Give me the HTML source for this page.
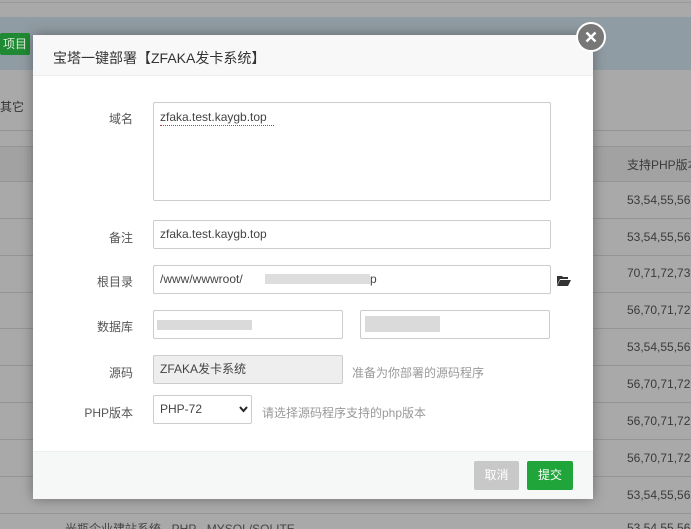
<!DOCTYPE html>
<html><head><meta charset="utf-8"><style>
*{box-sizing:border-box;margin:0;padding:0}
html,body{width:691px;height:529px;overflow:hidden}
body{position:relative;background:#a9a9a9;font-family:"Liberation Sans","Noto Sans CJK SC",sans-serif;font-size:12px;color:#333;white-space:nowrap}
.a{position:absolute}
.line{position:absolute;left:0;width:691px;height:1px;background:#959595}
.r{position:absolute;left:627px;color:#3a3a3a;font-size:12px;white-space:nowrap}
.dlg{position:absolute;left:33px;top:35px;width:560px;height:464px;background:#fff;box-shadow:0 0 12px rgba(0,0,0,.35)}
.lbl{position:absolute;width:100px;text-align:right;color:#555;font-size:12px}
.inp{position:absolute;border:1px solid #ccc;border-radius:2px;background:#fff;color:#444;font-size:12px;padding-left:6px;line-height:27px}
.hint{position:absolute;color:#999;font-size:12px}
.blur{position:absolute;background:#bbb;opacity:.8}
</style></head><body>
<div class="line" style="top:2px;background:#999"></div>
<div class="a" style="left:0;top:17px;width:691px;height:53px;background:#909ca3"></div>
<div class="a" style="left:0;top:33px;width:30px;height:22px;background:#1f8a33;border-radius:2px;color:#d9ead9;font-size:12px;line-height:22px;text-align:center">项目</div>
<div class="a" style="left:0;top:98px;color:#333;font-size:12px">其它</div>
<div class="line" style="top:130px"></div>
<div class="a" style="left:0;top:146px;width:691px;height:35px;background:#a2a2a2"></div>
<div class="line" style="top:146px"></div>
<div class="r" style="top:156px">支持PHP版本</div>
<div class="line" style="top:181px"></div><div class="r" style="top:193px">53,54,55,56</div>
<div class="line" style="top:218px"></div><div class="r" style="top:230px">53,54,55,56</div>
<div class="line" style="top:255px"></div><div class="r" style="top:266px">70,71,72,73</div>
<div class="line" style="top:292px"></div><div class="r" style="top:303px">56,70,71,72</div>
<div class="line" style="top:328px"></div><div class="r" style="top:340px">53,54,55,56</div>
<div class="line" style="top:365px"></div><div class="r" style="top:377px">56,70,71,72</div>
<div class="line" style="top:402px"></div><div class="r" style="top:414px">56,70,71,72</div>
<div class="line" style="top:439px"></div><div class="r" style="top:451px">56,70,71,72</div>
<div class="line" style="top:476px"></div><div class="r" style="top:488px">53,54,55,56</div>
<div class="line" style="top:513px"></div><div class="r" style="top:521px">53,54,55,56</div>
<div class="a" style="left:65px;top:520px;color:#444">光瓶企业建站系统 - PHP - MYSQL/SQLITE</div>

<div class="dlg">
 <div class="a" style="left:0;top:0;width:560px;height:41px;background:#f8f8f8;border-bottom:1px solid #eee"></div>
 <div class="a" style="left:20px;top:13px;font-size:14px;color:#333">宝塔一键部署【ZFAKA发卡系统】</div>
 <div class="a" style="left:0;top:416px;width:560px;height:48px;background:#f6f8f8;border-top:1px solid #eee"></div>
</div>
<div class="lbl" style="left:33px;top:110px">域名</div>
<div class="inp" style="left:153px;top:102px;width:398px;height:99px;line-height:normal;padding-top:7px">zfaka.test.kaygb.top<div style="position:absolute;left:6px;top:22px;width:114px;border-bottom:1px dotted #d33"></div></div>
<div class="lbl" style="left:33px;top:229px">备注</div>
<div class="inp" style="left:153px;top:220px;width:398px;height:29px">zfaka.test.kaygb.top</div>
<div class="lbl" style="left:33px;top:273px">根目录</div>
<div class="inp" style="left:153px;top:265px;width:398px;height:29px">/www/wwwroot/</div>
<div class="blur" style="left:265px;top:274px;width:105px;height:10px;opacity:.5"></div>
<div class="a" style="left:370px;top:272px;color:#444">p</div>
<svg class="a" style="left:557px;top:275px" width="14" height="11" viewBox="0 0 14 11"><path d="M0 1h5l1 1h5v2H3L0 10z" fill="#333"/><path d="M3 5h11l-3 6H0z" fill="#333"/></svg>
<div class="lbl" style="left:33px;top:318px">数据库</div>
<div class="inp" style="left:153px;top:310px;width:190px;height:29px"></div>
<div class="blur" style="left:157px;top:320px;width:95px;height:10px;opacity:.55"></div>
<div class="inp" style="left:360px;top:310px;width:190px;height:29px"></div>
<div class="blur" style="left:365px;top:316px;width:75px;height:16px;opacity:.55"></div>
<div class="lbl" style="left:33px;top:364px">源码</div>
<div class="inp" style="left:153px;top:355px;width:190px;height:29px;background:#eee">ZFAKA发卡系统</div>
<div class="hint" style="left:352px;top:364px">准备为你部署的源码程序</div>
<div class="lbl" style="left:33px;top:404px">PHP版本</div>
<div class="inp" style="left:153px;top:395px;width:99px;height:29px">PHP-72<svg class="a" style="left:85px;top:10px" width="9" height="7" viewBox="0 0 9 7"><path d="M1 1l3.5 4L8 1" stroke="#222" stroke-width="2" fill="none"/></svg></div>
<div class="hint" style="left:262px;top:404px">请选择源码程序支持的php版本</div>
<div class="a" style="left:474px;top:461px;width:45px;height:29px;background:#c8c8c8;border-radius:2px;color:#fff;text-align:center;line-height:29px">取消</div>
<div class="a" style="left:527px;top:461px;width:46px;height:29px;background:#20a53a;border-radius:2px;color:#fff;text-align:center;line-height:29px">提交</div>
<div class="a" style="left:576px;top:22px;width:30px;height:30px;border-radius:50%;background:#777;border:2px solid #fff"><svg class="a" style="left:7px;top:7px" width="12" height="12" viewBox="0 0 12 12"><path d="M1.5 1.5l9 9M10.5 1.5l-9 9" stroke="#fff" stroke-width="2.4"/></svg></div>
</body></html>
